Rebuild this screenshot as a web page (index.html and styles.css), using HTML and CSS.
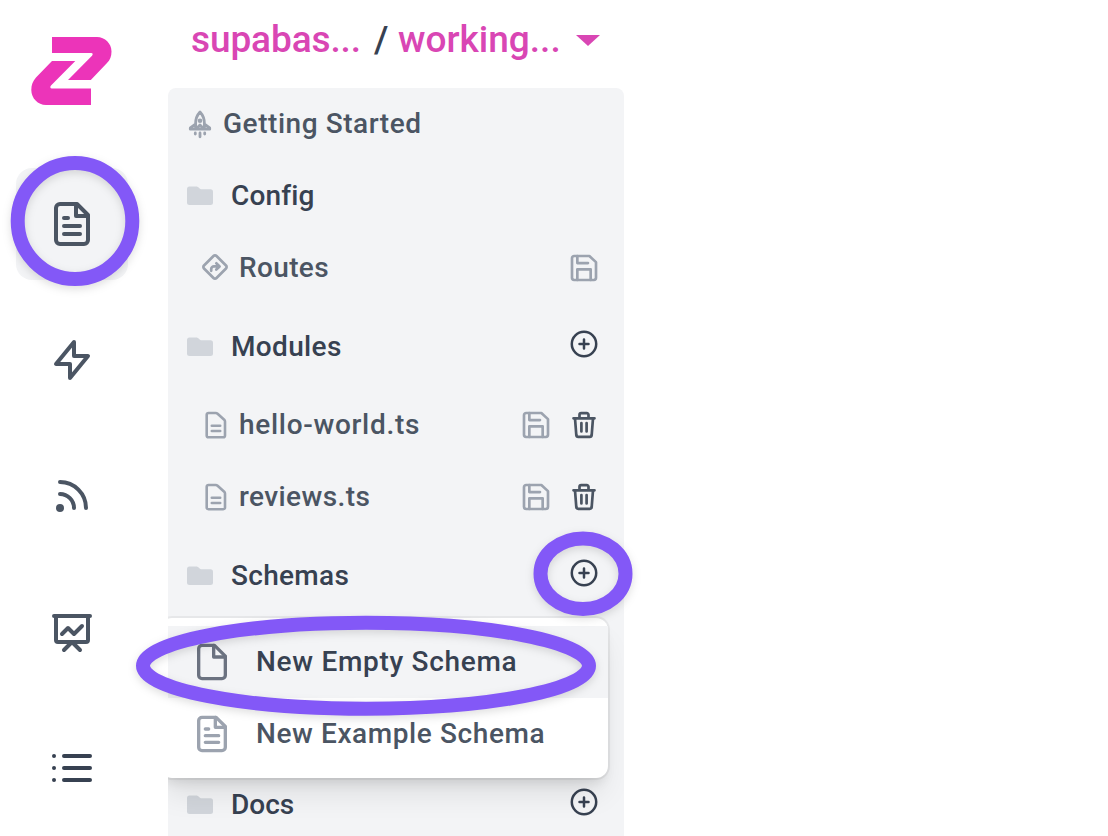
FILE: index.html
```
<!DOCTYPE html>
<html lang="en">
<head>
<meta charset="utf-8">
<title>Files</title>
<link rel="stylesheet" href="styles.css">
</head>
<body>
<svg class="defs" aria-hidden="true">
  <symbol id="folder" viewBox="0 0 26 20"><path d="M0 3a2.500 2.500 0 0 1 2.500-2.500h7.300c1.600 0 2.700 2.700 4.200 2.700h9.500A2.500 2.500 0 0 1 26 5.700v10.800a2.500 2.500 0 0 1-2.500 2.500h-21A2.500 2.500 0 0 1 0 16.500z"/></symbol>
  <symbol id="save" viewBox="0 0 24 24"><path d="M19.400 21H4.600A1.600 1.600 0 0 1 3 19.400V4.600A1.600 1.600 0 0 1 4.600 3H16l5 4.600v11.800a1.600 1.600 0 0 1-1.600 1.600z"/><path d="M17 21v-8H7v8M7 3v5.300h8"/></symbol>
  <symbol id="plus" viewBox="0 0 32 32"><circle cx="16" cy="16" r="12.200"/><path d="M16 11.500v9M11.500 16h9"/></symbol>
  <symbol id="trash" viewBox="0 0 32 32"><path d="M5.500 9.300h21M7 9.300l1.300 16.700a2 2 0 0 0 2 1.800h11.400a2 2 0 0 0 2-1.800L25 9.300M11.500 9V5.800a1.700 1.700 0 0 1 1.700-1.700h5.600a1.700 1.700 0 0 1 1.700 1.700V9M13.400 14v8.500M18.600 14v8.500"/></symbol>
  <symbol id="doc" viewBox="0 0 24 28"><path d="M4.500 2h7.200c.8 0 1.300.2 1.900.7l6.600 6c.6.600.8 1.100.8 1.900V24.400a1.800 1.800 0 0 1-1.800 1.800H4.500a1.800 1.800 0 0 1-1.800-1.800V3.800A1.800 1.800 0 0 1 4.500 2zM7.800 14.700h8.400M7.800 20h8.400"/></symbol>
  <symbol id="file-text" viewBox="0 0 24 24"><path d="M14.500 2H6a2 2 0 0 0-2 2v16a2 2 0 0 0 2 2h12a2 2 0 0 0 2-2V7.500z"/><path d="M14 2v6h6M16 13H8M16 17H8M10 9H8"/></symbol>
  <symbol id="file" viewBox="0 0 24 24"><path d="M13.500 2H6a2 2 0 0 0-2 2v16a2 2 0 0 0 2 2h12a2 2 0 0 0 2-2V8.500z"/><path d="M13 2v7h7"/></symbol>
</svg>

<div class="app">
  <nav class="rail">
    <a class="logo"><svg width="82" height="70" viewBox="0 0 82 70"><path d="M22 1h45c8 0 14.500 6.500 14.500 14.500 0 5-1.500 8.500-4.500 11.500L60.800 44H38l24-24.300c1.200-1.400.8-2.700-.8-2.700H22z"/><path d="M22 25h23.300L21 49.500c-1.200 1.400-.8 3 .8 3H61V69H16C8 69 1.300 62.300 1.300 54c0-5.500 1.700-9 4.700-12.500z"/></svg></a>
    <a class="tool active"><svg viewBox="0 0 24 24"><use href="#file-text"/></svg></a>
    <a class="tool"><svg viewBox="0 0 24 24"><path d="M13 10V3L4 14h7v7l9-11h-7z"/></svg></a>
    <a class="tool"><svg viewBox="0 0 24 24"><path d="M6 5c7.180 0 13 5.820 13 13M6 11a7 7 0 0 1 7 7m-6 0a1 1 0 1 1-2 0 1 1 0 0 1 2 0z"/></svg></a>
    <a class="tool"><svg viewBox="0 0 24 24"><path d="M7 13l3-3 3 3 4-4M8 21l4-4 4 4M3 4h18M4 4h16v12a1 1 0 0 1-1 1H5a1 1 0 0 1-1-1V4z"/></svg></a>
    <a class="tool dark"><svg viewBox="0 0 24 24"><path d="M8 6h13M8 12h13M8 18h13M3 6h.01M3 12h.01M3 18h.01"/></svg></a>
  </nav>

  <main class="main">
    <header class="crumbs">
      <span class="crumb project">supabas...</span>
      <span class="slash">/</span>
      <span class="crumb">working...</span>
      <svg class="caret" width="24" height="11" viewBox="0 0 24 11"><path d="M0 0h24L12 11z"/></svg>
    </header>

    <section class="panel">
      <div class="row start">
        <svg class="rocket" width="24" height="30" viewBox="0 0 24 30"><path class="line" d="M12 3c-3.300 3.500-4.400 7.500-4.400 11.500v5.700h8.800v-5.700C16.400 10.500 15.300 6.500 12 3zM7.500 15.200 2.300 19v1.200h5.200M16.500 15.200l5.200 3.800v1.200h-5.200M8.200 20l3.800-4 3.800 4M7.300 24v1M12 24v3.800M16.700 24v1"/><circle cx="12" cy="11.700" r="2.300"/></svg>
        <span class="label t-start">Getting Started</span>
      </div>
      <div class="row group"><svg class="folder"><use href="#folder"/></svg><span class="label t-config">Config</span></div>
      <div class="row item route">
        <svg class="sign" width="26" height="26" viewBox="0 0 26 26"><path d="M11.500 2a2.100 2.100 0 0 1 3 0L24 11.500a2.100 2.100 0 0 1 0 3L14.500 24a2.100 2.100 0 0 1-3 0L2 14.500a2.100 2.100 0 0 1 0-3z"/><path d="M9.200 16.800v-1.600a2.800 2.800 0 0 1 2.800-2.800h5.200M14.300 9.300l3.300 3.100-3.300 3.100"/></svg>
        <span class="label t-routes">Routes</span>
        <span class="actions"><svg class="save"><use href="#save"/></svg></span>
      </div>
      <div class="row group tall"><svg class="folder"><use href="#folder"/></svg><span class="label t-modules">Modules</span><span class="actions up"><svg class="plus"><use href="#plus"/></svg></span></div>
      <div class="row item"><svg class="doc"><use href="#doc"/></svg><span class="label t-hello">hello-world.ts</span><span class="actions"><svg class="save"><use href="#save"/></svg><svg class="trash"><use href="#trash"/></svg></span></div>
      <div class="row item"><svg class="doc"><use href="#doc"/></svg><span class="label t-reviews">reviews.ts</span><span class="actions"><svg class="save"><use href="#save"/></svg><svg class="trash"><use href="#trash"/></svg></span></div>
      <div class="row group tall anchor"><svg class="folder"><use href="#folder"/></svg><span class="label t-schemas">Schemas</span><span class="actions up"><svg class="plus"><use href="#plus"/></svg></span>
        <div class="menu">
          <div class="option selected"><svg><use href="#file"/></svg><span class="t-empty">New Empty Schema</span></div>
          <div class="option"><svg><use href="#file-text"/></svg><span class="t-example">New Example Schema</span></div>
        </div>
      </div>
      <div class="row covered"></div>
      <div class="row covered"></div>
      <div class="row group tall"><svg class="folder"><use href="#folder"/></svg><span class="label">Docs</span><span class="actions up"><svg class="plus"><use href="#plus"/></svg></span></div>
    </section>
  </main>
</div>

<svg class="marks" width="1108" height="836" viewBox="0 0 1108 836">
  <ellipse cx="75" cy="221" rx="57.300" ry="58"/>
  <ellipse cx="583" cy="573.700" rx="42.500" ry="35.300"/>
  <ellipse cx="366" cy="665.700" rx="223" ry="43"/>
</svg>
</body>
</html>
```
FILE: styles.css
```
* { box-sizing: border-box; }
body {
  margin: 0;
  background: #fff;
  color: #4b5563;
  font: 470 28px/36px Roboto, sans-serif;
}
svg { display: block; flex: none; stroke-linecap: round; stroke-linejoin: round; }
.defs { position: absolute; width: 0; height: 0; }
.app { display: flex; height: 836px; overflow: hidden; }

.rail { width: 168px; flex: none; padding: 36px 0 0 16px; display: flex; flex-direction: column; gap: 24px; }
.logo { height: 108px; padding-left: 14px; fill: #ec34b9; }
.tool { width: 112px; height: 112px; flex: none; border-radius: 16px; display: grid; place-items: center; }
.tool svg { width: 48px; height: 48px; fill: none; stroke: #4b5563; stroke-width: 2; }
.tool.active { background: #f3f4f6; }
.tool.dark svg { stroke: #374151; }

.main { width: 456px; flex: none; }
.crumbs { height: 88px; padding: 0 24px 8px 23px; display: flex; align-items: center; font-size: 37px; line-height: 44px; color: #d946b4; }
.crumb.project { width: 183px; letter-spacing: -0.100px; }
.slash { width: 24px; color: #374151; }
.caret { margin-left: auto; fill: #d946b4; }

.panel { height: 748px; overflow: hidden; border-radius: 8px 8px 0 0; background: #f3f4f6; display: flex; flex-direction: column; }
.row { height: 72px; flex: none; display: flex; align-items: center; padding-right: 24px; }
.row.tall { height: 85px; }
.row.start { padding-left: 20px; }
.row.start .label { margin-left: 11px; }
.row.group { padding-left: 19px; color: #374151; }
.row.group .label { margin-left: 18px; }
.row.item { padding-left: 36px; }
.row.item .label { margin-left: 11px; }
.row.route { padding-left: 34px; }
.anchor { position: relative; z-index: 1; }

.folder { width: 26px; height: 20px; fill: #d1d5db; }
.rocket { fill: #9ca3af; }
.rocket .line { fill: none; stroke: #9ca3af; stroke-width: 2.800; }
.sign { margin-top: -2px; fill: none; stroke: #9ca3af; stroke-width: 2.700; }
.doc { width: 24px; height: 28px; fill: none; stroke: #9ca3af; stroke-width: 2.600; }
.actions { margin-left: auto; display: flex; gap: 16px; }
.actions.up { margin-top: -5px; }
.actions svg { width: 32px; height: 32px; fill: none; stroke-width: 2.500; }
.actions .save { stroke: #9ca3af; stroke-width: 2; }
.actions .trash { stroke: #4b5563; stroke-width: 2.700; }
.actions .plus { stroke: #374151; }

.menu {
  position: absolute; top: 85px; left: -8px; width: 448px; height: 160px;
  padding: 8px 0; border-radius: 12px; background: #fff;
  box-shadow: 0 0 0 2px rgba(0,0,0,.05), 0 20px 30px -6px rgba(0,0,0,.1), 0 8px 12px -4px rgba(0,0,0,.1);
}
.option { height: 72px; padding-left: 32px; display: flex; align-items: center; gap: 24px; color: #4b5563; }
.option svg { width: 40px; height: 40px; fill: none; stroke: #9ca3af; stroke-width: 2; }
.option.selected { background: #f3f4f6; color: #374151; }
.option.selected svg { stroke: #6b7280; }

.t-start { letter-spacing: .55px; }
.t-config { letter-spacing: .15px; }
.t-routes { letter-spacing: .35px; }
.t-modules { letter-spacing: .35px; }
.t-hello { letter-spacing: .7px; }
.t-reviews { letter-spacing: .4px; }
.t-schemas { letter-spacing: .3px; }
.t-empty { letter-spacing: .7px; }
.t-example { letter-spacing: .6px; }

.marks { position: absolute; inset: 0; z-index: 2; fill: none; stroke: #8358f7; stroke-width: 14; pointer-events: none; filter: drop-shadow(0 3px 4px rgba(0,0,0,.13)); }
```
